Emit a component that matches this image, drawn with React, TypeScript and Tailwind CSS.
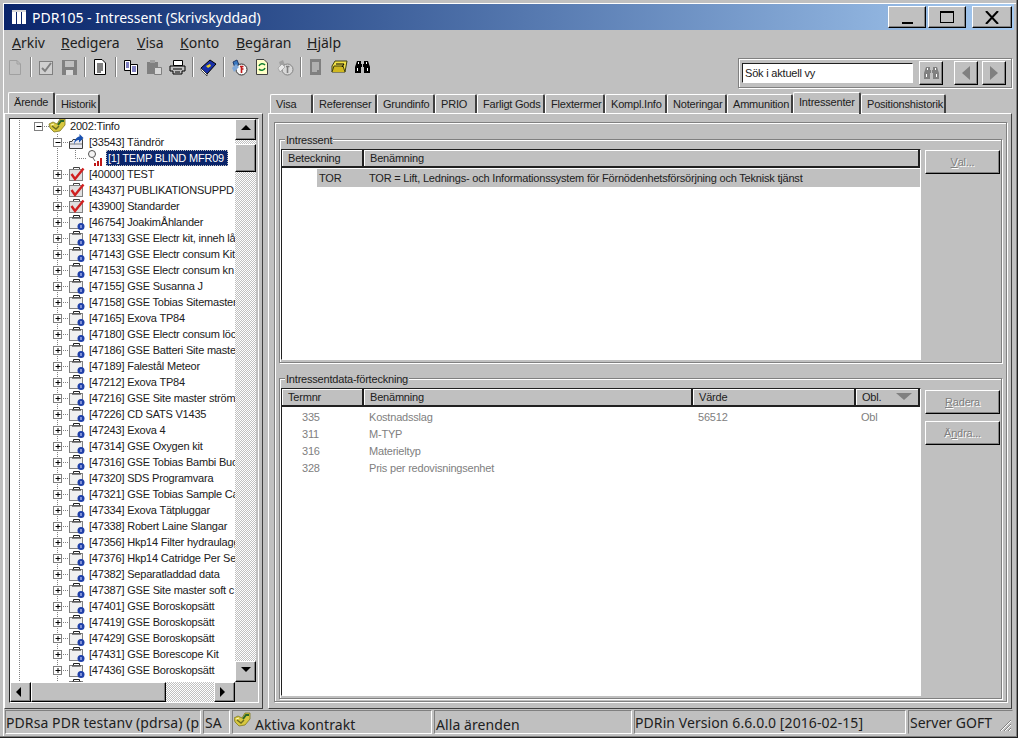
import type { ReactNode } from "react";

const raised = "border border-t-white border-l-white border-r-[#404040] border-b-[#404040]";
const button = "border border-t-white border-l-white border-r-black border-b-black shadow-[inset_-1px_-1px_0_#808080]";
const checker = "bg-[repeating-conic-gradient(#c0c0c0_0_25%,#ffffff_0_50%)] [background-size:2px_2px]";

const rightTabs = [
  { label: "Visa", w: "w-[43px]" },
  { label: "Referenser", w: "w-[64px]" },
  { label: "Grundinfo", w: "w-[58px]" },
  { label: "PRIO", w: "w-[42px]" },
  { label: "Farligt Gods", w: "w-[68px]" },
  { label: "Flextermer", w: "w-[60px]" },
  { label: "Kompl.Info", w: "w-[62px]" },
  { label: "Noteringar", w: "w-[60px]" },
  { label: "Ammunition", w: "w-[66px]" },
  { label: "Intressenter", w: "w-[68px]", active: true },
  { label: "Positionshistorik", w: "w-[85px]" },
];

const redRows = ["[40000] TEST", "[43437] PUBLIKATIONSUPPD", "[43900] Standarder"];
const lockRows = [
  "[46754] JoakimÅhlander",
  "[47133] GSE Electr kit, inneh lå",
  "[47143] GSE Electr consum Kit",
  "[47153] GSE Electr consum kn",
  "[47155] GSE Susanna J",
  "[47158] GSE Tobias Sitemaster",
  "[47165] Exova TP84",
  "[47180] GSE Electr consum löc",
  "[47186] GSE Batteri Site maste",
  "[47189] Falestål Meteor",
  "[47212] Exova TP84",
  "[47216] GSE Site master strömk",
  "[47226] CD SATS V1435",
  "[47243] Exova 4",
  "[47314] GSE Oxygen kit",
  "[47316] GSE Tobias Bambi Buc",
  "[47320] SDS Programvara",
  "[47321] GSE Tobias Sample Ca",
  "[47334] Exova Tätpluggar",
  "[47338] Robert Laine Slangar",
  "[47356] Hkp14 Filter hydraulagg",
  "[47376] Hkp14 Catridge Per Se",
  "[47382] Separatladdad data",
  "[47387] GSE Site master soft c",
  "[47401] GSE Boroskopsätt",
  "[47419] GSE Boroskopsätt",
  "[47429] GSE Boroskopsätt",
  "[47431] GSE Borescope Kit",
  "[47436] GSE Boroskopsätt",
  "[47438] GSE Bambi Bucket",
];

const dataRows = [
  { nr: "335", name: "Kostnadsslag", value: "56512", obl: "Obl" },
  { nr: "311", name: "M-TYP", value: "", obl: "" },
  { nr: "316", name: "Materieltyp", value: "", obl: "" },
  { nr: "328", name: "Pris per redovisningsenhet", value: "", obl: "" },
];

function Handshake() {
  return (
    <g>
      <path d="M0 6 L4 4 L8 6 L11 1 L16 1 L16 7 L11 13 L5 14 L1 10 Z" fill="#d8c840" stroke="#807820" strokeWidth="0.8" />
      <path d="M9 7 L12 3 L15 3" fill="none" stroke="#286828" strokeWidth="2" />
      <path d="M3 8 L7 11 L10 8" fill="none" stroke="#6a6a20" strokeWidth="1.4" />
      <path d="M2 7 L5 6" stroke="#fff8c0" strokeWidth="1" />
    </g>
  );
}

function FolderArrow() {
  return (
    <g>
      <path d="M0.5 7.5 H3 L4 5.5 H13.5 V14.5 H0.5 Z" fill="#e8e8f0" stroke="#404040" />
      <path d="M1 10 H13" stroke="#808080" />
      <path d="M5 11 C6 7 8 6 10 6 V8.5 L14.5 4 L10.5 0 V2.5 C7 3 5 7 5 11 Z" fill="#1850b0" />
    </g>
  );
}

function Case({ lock }: { lock?: boolean }) {
  return (
    <g>
      <path d="M4.5 4 V1.5 H10.5 V4" fill="none" stroke={lock ? "#202020" : "#404040"} />
      <rect x="0.5" y="3.5" width="13" height="11" fill={lock ? "#f0f0f0" : "#e0e0e0"} stroke="#808080" />
      {lock ? (
        <g>
          <path d="M3 4 H12" stroke="#404040" strokeWidth="1.2" />
          <circle cx="12" cy="12.5" r="3.5" fill="#2040a8" />
          <rect x="11.5" y="11" width="1" height="3" fill="#e0e0ff" />
        </g>
      ) : (
        <path d="M2.5 8 L6 13 L14.5 2.5" fill="none" stroke="#d02020" strokeWidth="2.4" />
      )}
    </g>
  );
}

function Probe() {
  return (
    <g>
      <circle cx="5" cy="4" r="3.5" fill="#f4f4f4" stroke="#505050" />
      <path d="M6 8 L8 11" stroke="#606060" />
      <path d="M8 13 V16 M11 11 V16 M14 8 V16" stroke="#c01818" strokeWidth="2" />
    </g>
  );
}

function PlusBox({ x, open }: { x: number; open?: boolean }) {
  return (
    <g>
      <rect x={x - 4} y="4.5" width="8" height="8" fill="#fff" stroke="#808080" />
      <path d={`M${x - 2} 8.5 H${x + 3}`} stroke="#000" />
      {!open && <path d={`M${x + 0.5} 6 V11`} stroke="#000" />}
    </g>
  );
}

const dots = { stroke: "#808080", strokeDasharray: "1 1", fill: "none" };

function TreeRow({ level, text, icon, selected, open }: { level: 0 | 1 | 2; text: string; icon: ReactNode; selected?: boolean; open?: boolean }) {
  const width = level === 0 ? 59 : level === 1 ? 78 : 95;
  const iconX = level === 0 ? 39 : level === 1 ? 59 : 77;
  return (
    <div className="flex h-4 shrink-0 items-center whitespace-nowrap">
      <svg width={width} height={16} className="shrink-0">
        <path d="M9.5 0 V16" {...dots} />
        {level === 0 && <path d="M32 8.5 H39" {...dots} />}
        {level === 0 && <PlusBox x={28.5} open />}
        {level > 0 && <path d="M47.5 0 V16" {...dots} />}
        {level === 1 && <path d="M51 8.5 H59" {...dots} />}
        {level === 1 && <PlusBox x={47.5} open={open} />}
        {level === 2 && <path d="M65.5 0 V8.5 H77" {...dots} />}
        <g transform={`translate(${iconX} 0)`}>{icon}</g>
      </svg>
      <span className={selected ? "ml-[1px] w-[122px] overflow-hidden bg-[#0a246a] pl-[2px] leading-[16px] text-white outline-1 outline-dotted outline-[#c0c0c0] -outline-offset-1" : "ml-[1px] leading-[16px] text-[#202020]"}>{text}</span>
    </div>
  );
}

function Arrow({ dir }: { dir: "up" | "down" | "left" | "right" }) {
  const d = { up: "M1 6 L6 1 L11 6 Z", down: "M1 1 L11 1 L6 6 Z", left: "M6 0 L1 5 L6 10 Z", right: "M1 0 L6 5 L1 10 Z" }[dir];
  return (
    <svg width={12} height={11}>
      <path d={d} fill="#000" />
    </svg>
  );
}

function Binoculars({ fill }: { fill: string }) {
  return (
    <g fill={fill}>
      <path d="M3 2 H7 V5 H8 V8 H7 V14 H1 V8 Z" />
      <path d="M14 2 H10 V5 H9 V8 H10 V14 H16 V8 Z" />
      <path d="M3 9 H4 V12 H3 Z M13 9 H14 V12 H13 Z M4 3 H5 V5 H4 Z M12 3 H13 V5 H12 Z" fill="#ffffff" />
    </g>
  );
}

function ToolIcon({ name }: { name: string }) {
  const g = "#808080";
  const icons: Record<string, ReactNode> = {
    new: <path d="M2.5 1.5 H10 L13.5 5 V15.5 H2.5 Z M10 1.5 V5 H13.5" fill="none" stroke="#a0a0a0" />,
    check: (
      <g>
        <rect x="1.5" y="2.5" width="13" height="13" fill="#d0d0d0" stroke={g} />
        <path d="M4 9 L7 12 L13 4" fill="none" stroke={g} strokeWidth="2" />
      </g>
    ),
    save: (
      <g>
        <rect x="1" y="1" width="15" height="15" fill={g} />
        <rect x="4" y="2" width="9" height="6" fill="#c0c0c0" />
        <rect x="5" y="11" width="7" height="5" fill="#d8d8d8" />
      </g>
    ),
    doc: (
      <g>
        <path d="M2.5 0.5 H10 L13.5 4 V15.5 H2.5 Z" fill="#fff" stroke="#000" />
        <path d="M5 5 H11 M5 7 H11 M5 9 H11 M5 11 H11 M5 13 H9" stroke="#000" />
      </g>
    ),
    copy: (
      <g>
        <path d="M1.5 1.5 H7.5 V11.5 H1.5 Z" fill="#fff" stroke="#000" />
        <path d="M7.5 5.5 H14.5 V15.5 H7.5 Z" fill="#fff" stroke="#000" />
        <path d="M3 4 H6 M3 6 H6 M3 8 H6 M9 8 H13 M9 10 H13 M9 12 H13" stroke="#000080" />
      </g>
    ),
    paste: (
      <g>
        <rect x="1" y="3" width="11" height="12" fill={g} />
        <rect x="4" y="1" width="5" height="3" fill="#a0a0a0" />
        <path d="M8.5 8.5 H15.5 V15.5 H8.5 Z" fill="#d8d8d8" stroke={g} />
      </g>
    ),
    print: (
      <g>
        <path d="M4.5 1.5 H13.5 V6.5 H4.5 Z" fill="#fff" stroke="#000" />
        <path d="M1 7 H16 V12 H13 V15 H4 V12 H1 Z" fill="#c0c0c0" stroke="#000" />
        <path d="M4 10 H13 M6 13 H11" stroke="#000" />
      </g>
    ),
    book: (
      <g>
        <path d="M1 9 L10 1 L16 5 L7 15 Z" fill="#1830a8" stroke="#000" />
        <path d="M1 9 L7 15 L7 17 L1 11 Z" fill="#fff" stroke="#000" strokeWidth="0.6" />
        <path d="M6 7 L10 5 L11 7 L8 9 Z" fill="#e8d030" />
      </g>
    ),
    globe: (
      <g>
        <path d="M2 3 L6 1 L8 6 L4 9 Z" fill="#3878c0" stroke="#203868" />
        <circle cx="10.5" cy="10.5" r="5.5" fill="#f8f8f8" stroke="#303030" />
        <path d="M9 7.5 H12.5 M10.5 7.5 V14 M10.5 10 H12.5" stroke="#c01818" strokeWidth="1.6" />
        <path d="M1 9 L5 5 L8 8 L3 13 Z" fill="#80a8d8" />
      </g>
    ),
    refresh: (
      <g>
        <path d="M2.5 0.5 H10 L13.5 4 V15.5 H2.5 Z" fill="#ffffc8" stroke="#404040" />
        <path d="M5 7 A3.5 3.5 0 0 1 11 6 M11 9 A3.5 3.5 0 0 1 5 10" fill="none" stroke="#108030" strokeWidth="1.6" />
      </g>
    ),
    globeOff: (
      <g>
        <path d="M2 3 L6 1 L8 6 L4 9 Z" fill="#a0a0a0" />
        <circle cx="10.5" cy="10.5" r="5.5" fill="#d8d8d8" stroke={g} />
        <path d="M9 7.5 H12.5 M10.5 7.5 V14" stroke={g} strokeWidth="1.6" />
        <path d="M1 9 L5 5 L8 8 L3 13 Z" fill="#e8e8e8" stroke={g} strokeWidth="0.5" />
      </g>
    ),
    docOff: (
      <g>
        <path d="M2 0 H13 V16 H2 Z" fill={g} />
        <path d="M4 4 H11 M4 6 H11 M4 8 H11 M4 10 H11 M4 12 H9" stroke="#e0e0e0" />
      </g>
    ),
    folder: (
      <g>
        <path d="M1 7 L4 2 H16 L14 13 H1 Z" fill="#f0e048" stroke="#404010" />
        <path d="M1 13 L3 7 H12 L14 13" fill="#d0b820" stroke="#404010" />
        <path d="M5 5 H13 L11 8" fill="none" stroke="#000" />
      </g>
    ),
    binoc: <Binoculars fill="#000" />,
  };
  return (
    <svg width={17} height={17} viewBox="0 0 17 17">
      {icons[name]}
    </svg>
  );
}

const toolbar = ["new", "|", "check", "save", "|", "doc", "|", "copy", "paste", "print", "|", "book", "|", "globe", "refresh", "globeOff", "|", "docOff", "folder", "binoc"];

function Tab({ label, width, active }: { label: string; width: string; active?: boolean }) {
  return (
    <div
      className={`${width} flex shrink-0 items-center rounded-t-[2px] border-t border-l border-r-2 border-t-white border-l-white border-r-[#404040] pl-[5px] ${
        active ? "z-10 -mb-px h-[22px] pb-[3px]" : "h-[19px]"
      }`}
    >
      {label}
    </div>
  );
}

function SideButton({ children }: { children: ReactNode }) {
  return <div className={`${button} flex h-[24px] w-[75px] items-center justify-center text-[#808080] [text-shadow:1px_1px_0_#ffffff]`}>{children}</div>;
}

function HeaderCell({ className, children }: { className: string; children: ReactNode }) {
  return <div className={`${className} flex h-full shrink-0 items-center border-r-2 border-r-[#202020] pl-[6px] shadow-[inset_1px_1px_0_#ffffff]`}>{children}</div>;
}

function Group({ title, className, children }: { title: string; className: string; children: ReactNode }) {
  return (
    <div className={`${className} flex flex-col border border-[#808080] shadow-[1px_1px_0_#ffffff,inset_1px_1px_0_#ffffff]`}>
      <div className="mt-[-8px] ml-[5px] h-[17px] w-fit bg-[#c0c0c0] px-px leading-[16px] text-[#202020]">{title}</div>
      {children}
    </div>
  );
}

function StatusCell({ className, children }: { className: string; children: ReactNode }) {
  return <div className={`${className} flex h-full shrink-0 items-center overflow-hidden whitespace-nowrap border border-t-[#808080] border-l-[#808080] border-r-white border-b-white`}>{children}</div>;
}

export default function App() {
  return (
    <div className="flex h-[738px] w-[1018px] flex-col overflow-hidden bg-[#c0c0c0] p-[4px] font-['Liberation_Sans',sans-serif] text-[11px] tracking-[-0.2px] text-[#202020] shadow-[inset_-1px_-1px_0_#202020,inset_-2px_-2px_0_#808080,inset_3px_3px_0_#c0c0c0,inset_4px_4px_0_#ffffff]">
      {/* title bar */}
      <div className="flex h-[26px] shrink-0 items-center bg-gradient-to-r from-[#0a246a] to-[#a6caf0] pr-[2px] pl-[6px]">
        <svg width={18} height={16} className="mr-[4px]">
          <path d="M2 3 H6 V15 H2 Z M7 3 H11 V15 H7 Z M12 3 H16 V15 H12 Z" fill="#fff" />
          <path d="M2 1 H16 V3 H2 Z" fill="#d8d8d8" />
        </svg>
        <span className="font-['Noto_Sans',sans-serif] text-[14px] tracking-normal text-white">PDR105 - Intressent (Skrivskyddad)</span>
        <div className="ml-auto flex h-[22px]">
          <div className={`${button} flex h-full w-[38px] items-end justify-center bg-[#c0c0c0] pb-[3px]`}>
            <div className="h-[2px] w-[11px] bg-black" />
          </div>
          <div className={`${button} ml-[2px] flex h-full w-[38px] items-center justify-center bg-[#c0c0c0]`}>
            <div className="h-[12px] w-[14px] border border-t-2 border-black" />
          </div>
          <div className={`${button} ml-[6px] flex h-full w-[40px] items-center justify-center bg-[#c0c0c0]`}>
            <svg width={14} height={13}>
              <path d="M1 0 L13 13 M13 0 L1 13" stroke="#000" strokeWidth="2" />
            </svg>
          </div>
        </div>
      </div>

      {/* menu */}
      <div className="flex h-[26px] shrink-0 items-center pb-[2px] pl-[8px] font-['Noto_Sans',sans-serif] text-[14px] tracking-normal text-[#202020]">
        <span className="w-[49px]"><u>A</u>rkiv</span>
        <span className="w-[76px]"><u>R</u>edigera</span>
        <span className="w-[43px]"><u>V</u>isa</span>
        <span className="w-[56px]"><u>K</u>onto</span>
        <span className="w-[71px]"><u>B</u>egäran</span>
        <span><u>H</u>jälp</span>
      </div>

      {/* toolbar */}
      <div className="flex h-[34px] shrink-0 items-start">
        <div className="flex h-[22px] items-center">
          {toolbar.map((name, i) =>
            name === "|" ? (
              <div key={i} className="flex h-full w-[8px] justify-center">
                <div className="my-[1px] w-[2px] border-r border-l border-r-white border-l-[#808080]" />
              </div>
            ) : (
              <div key={i} className="flex h-full w-[23px] items-center justify-center">
                <ToolIcon name={name} />
              </div>
            ),
          )}
        </div>
        <div className="mt-[2px] mr-[2px] ml-auto flex h-[30px] w-[274px] items-center border border-[#808080] pr-[3px] pl-[3px] shadow-[1px_1px_0_#ffffff,inset_1px_1px_0_#ffffff]">
          <div className="flex h-[20px] w-[171px] items-center border border-t-[#202020] border-l-[#202020] border-r-white border-b-white bg-white pl-[2px] text-[#202020]">Sök i aktuell vy</div>
          <div className={`${button} ml-[6px] flex h-[24px] w-[24px] items-center justify-center`}>
            <svg width={17} height={17}>
              <Binoculars fill="#808080" />
            </svg>
          </div>
          <div className={`${button} ml-[11px] flex h-[24px] w-[24px] items-center justify-center`}>
            <svg width={10} height={14}>
              <path d="M9 0 L1 7 L9 14 Z" fill="#808080" />
            </svg>
          </div>
          <div className={`${button} ml-[4px] flex h-[24px] w-[24px] items-center justify-center`}>
            <svg width={10} height={14}>
              <path d="M1 0 L9 7 L1 14 Z" fill="#808080" />
            </svg>
          </div>
        </div>
      </div>

      {/* main */}
      <div className="flex min-h-0 flex-1">
        {/* left panel */}
        <div className="flex w-[259px] shrink-0 flex-col">
          <div className="flex h-[23px] shrink-0 items-end pl-[4px]">
            <Tab label="Ärende" width="w-[47px]" active />
            <Tab label="Historik" width="w-[45px]" />
          </div>
          <div className={`${raised} flex min-h-0 flex-1 flex-col pt-[4px] pr-[3px] pb-[5px] pl-[4px]`}>
            <div className="flex min-h-0 flex-1 flex-col border border-t-[#202020] border-l-[#202020] border-r-white border-b-white">
              <div className="flex min-h-0 flex-1">
                <div className="w-[225px] shrink-0 overflow-hidden bg-white">
                  <div className="-mt-px flex flex-col">
                    <TreeRow level={0} text="2002:Tinfo" icon={<Handshake />} />
                    <TreeRow level={1} text="[33543] Tändrör" icon={<FolderArrow />} open />
                    <TreeRow level={2} text="[1] TEMP BLIND MFR09" icon={<Probe />} selected />
                    {redRows.map((t) => (
                      <TreeRow key={t} level={1} text={t} icon={<Case />} />
                    ))}
                    {lockRows.map((t) => (
                      <TreeRow key={t} level={1} text={t} icon={<Case lock />} />
                    ))}
                  </div>
                </div>
                <div className={`flex w-[21px] shrink-0 flex-col ${checker}`}>
                  <div className={`${button} flex h-[21px] items-center justify-center bg-[#c0c0c0]`}>
                    <Arrow dir="up" />
                  </div>
                  <div className={`${button} mt-[4px] h-[28px] bg-[#c0c0c0]`} />
                  <div className={`${button} mt-auto flex h-[21px] items-center justify-center bg-[#c0c0c0]`}>
                    <Arrow dir="down" />
                  </div>
                </div>
              </div>
              <div className="flex h-[20px] shrink-0">
                <div className={`flex w-[225px] ${checker}`}>
                  <div className={`${button} flex w-[21px] items-center justify-center bg-[#c0c0c0]`}>
                    <Arrow dir="left" />
                  </div>
                  <div className={`${button} w-[135px] bg-[#c0c0c0]`} />
                  <div className={`${button} ml-auto flex w-[21px] items-center justify-center bg-[#c0c0c0]`}>
                    <Arrow dir="right" />
                  </div>
                </div>
                <div className="flex-1 bg-[#c0c0c0]" />
              </div>
            </div>
          </div>
        </div>

        {/* right panel */}
        <div className="ml-[5px] flex w-[744px] shrink-0 flex-col">
          <div className="flex h-[23px] shrink-0 items-end pl-[2px]">
            {rightTabs.map((t) => (
              <Tab key={t.label} label={t.label} width={t.w} active={t.active} />
            ))}
          </div>
          <div className={`${raised} flex min-h-0 flex-1 flex-col pt-[8px] pr-[4px] pb-[6px] pl-[5px]`}>
            <div className="flex min-h-0 flex-1 flex-col border border-[#808080] px-[4px] pt-[16px] pb-[2px] shadow-[inset_1px_1px_0_#ffffff,1px_1px_0_#ffffff]">
              <Group title="Intressent" className="h-[224px] shrink-0">
                <div className="flex min-h-0 flex-1 pr-[2px] pb-[2px] pl-[1px]">
                  <div className="flex w-[640px] shrink-0 flex-col border border-t-[#202020] border-l-[#202020] border-r-white border-b-white">
                    <div className="flex h-[18px] shrink-0 border-b-2 border-b-[#202020]">
                      <HeaderCell className="w-[82px]">Beteckning</HeaderCell>
                      <HeaderCell className="flex-1">Benämning</HeaderCell>
                    </div>
                    <div className="flex-1 bg-white pt-[1px]">
                      <div className="ml-[35px] flex h-[18px] items-center bg-[#c0c0c0]">
                        <span className="w-[52px] pl-[2px]">TOR</span>
                        <span>TOR = Lift, Lednings- och Informationssystem för Förnödenhetsförsörjning och Teknisk tjänst</span>
                      </div>
                    </div>
                  </div>
                  <div className="ml-[4px] pt-[1px]">
                    <SideButton><u>V</u>al...</SideButton>
                  </div>
                </div>
              </Group>
              <Group title="Intressentdata-förteckning" className="mt-[15px] min-h-0 flex-1">
                <div className="flex min-h-0 flex-1 pr-[2px] pb-[2px] pl-[1px]">
                  <div className="flex w-[640px] shrink-0 flex-col border border-t-[#202020] border-l-[#202020] border-r-white border-b-white">
                    <div className="flex h-[18px] shrink-0 border-b-2 border-b-[#202020]">
                      <HeaderCell className="w-[82px]">Termnr</HeaderCell>
                      <HeaderCell className="w-[329px]">Benämning</HeaderCell>
                      <HeaderCell className="w-[163px]">Värde</HeaderCell>
                      <HeaderCell className="flex-1">
                        Obl.
                        <svg width={16} height={8} className="ml-[15px]">
                          <path d="M0 0 H16 L8 7 Z" fill="#808080" />
                        </svg>
                      </HeaderCell>
                    </div>
                    <div className="flex-1 bg-white pt-[2px] text-[#808080]">
                      {dataRows.map((r) => (
                        <div key={r.nr} className="flex h-[17px] items-center">
                          <span className="w-[82px] pl-[20px]">{r.nr}</span>
                          <span className="w-[329px] pl-[5px]">{r.name}</span>
                          <span className="w-[163px] pl-[5px]">{r.value}</span>
                          <span className="pl-[5px]">{r.obl}</span>
                        </div>
                      ))}
                    </div>
                  </div>
                  <div className="ml-[4px] flex flex-col gap-[7px] pt-[2px]">
                    <SideButton><u>R</u>adera</SideButton>
                    <SideButton>Ä<u>n</u>dra...</SideButton>
                  </div>
                </div>
              </Group>
            </div>
          </div>
        </div>
      </div>

      {/* status bar */}
      <div className="mt-[1px] flex h-[24px] shrink-0 gap-[2px] pr-[1px] pl-[1px] font-['Noto_Sans',sans-serif] text-[14px] tracking-[0.08px] text-[#202020]">
        <StatusCell className="w-[196px]">PDRsa PDR testanv (pdrsa) (p</StatusCell>
        <StatusCell className="w-[27px] pl-px">SA</StatusCell>
        <StatusCell className="w-[200px] pl-px">
          <svg width={17} height={16} className="mb-[4px] shrink-0">
            <Handshake />
          </svg>
          <span className="mt-[4px] ml-[4px]">Aktiva kontrakt</span>
        </StatusCell>
        <StatusCell className="w-[198px] pl-px">
          <span className="mt-[4px]">Alla ärenden</span>
        </StatusCell>
        <StatusCell className="w-[272px]">PDRin Version 6.6.0.0 [2016-02-15]</StatusCell>
        <div className="flex h-full min-w-0 flex-1 items-center whitespace-nowrap border border-t-[#808080] border-l-[#808080] border-r-transparent border-b-transparent pl-px tracking-normal">
          Server GOFT
          <svg width={14} height={14} className="mt-[6px] ml-auto shrink-0">
            <path d="M13 2 L2 13 M13 6 L6 13 M13 10 L10 13" stroke="#808080" />
            <path d="M13 3 L3 13 M13 7 L7 13 M13 11 L11 13" stroke="#ffffff" />
          </svg>
        </div>
      </div>
    </div>
  );
}
